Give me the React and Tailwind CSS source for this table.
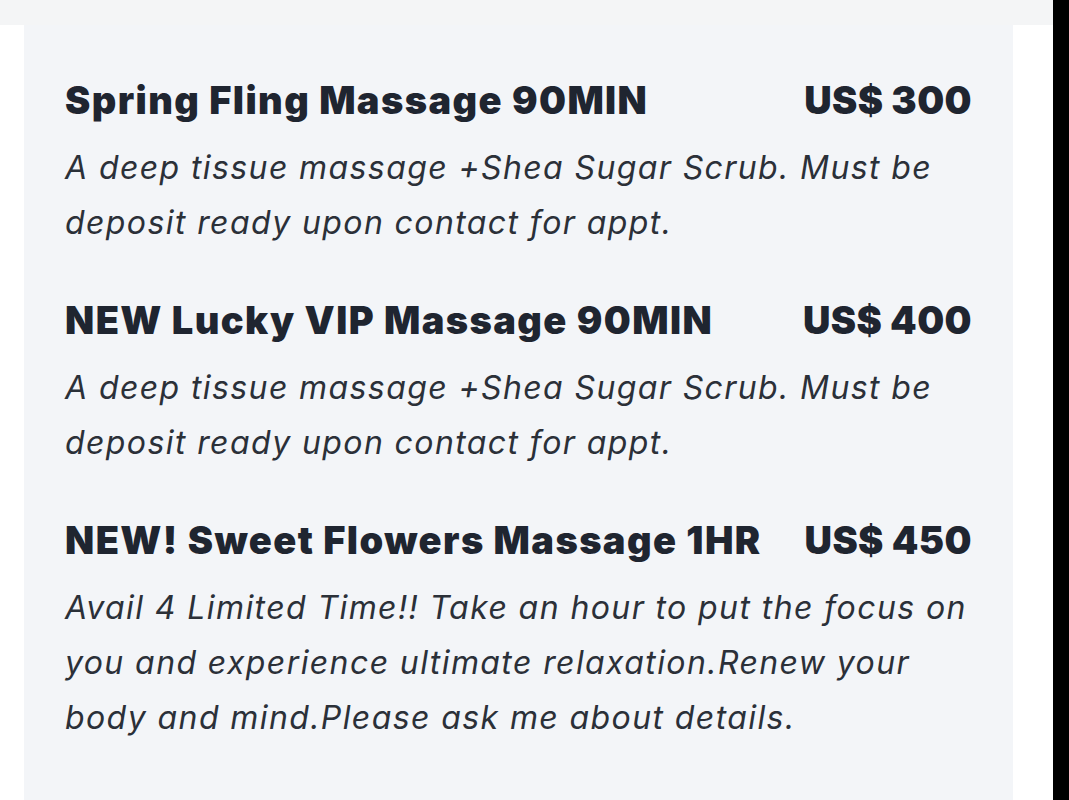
import React from "react";

const services = [
  {
    title: "Spring Fling Massage 90MIN",
    price: "US$ 300",
    text: "A deep tissue massage +Shea Sugar Scrub. Must be deposit ready upon contact for appt.",
  },
  {
    title: "NEW Lucky VIP Massage 90MIN",
    price: "US$ 400",
    text: "A deep tissue massage +Shea Sugar Scrub. Must be deposit ready upon contact for appt.",
  },
  {
    title: "NEW! Sweet Flowers Massage 1HR",
    price: "US$ 450",
    text: "Avail 4 Limited Time!! Take an hour to put the focus on you and experience ultimate relaxation.Renew your body and mind.Please ask me about details.",
  },
];

const App = () => {
  return (
    <div className="flex h-[800px] w-[1069px] overflow-hidden bg-white font-['Inter',sans-serif]">
      <div className="flex flex-1 flex-col">
        <div className="h-[25px] bg-[#f4f5f6]"></div>
        <div className="flex flex-1 bg-white pl-[24px] pr-[40px]">
          <div className="flex flex-1 flex-col gap-[48px] bg-[#f3f5f8] px-[41px] pt-[53px]">
            {services.map((item, key) => {
              return (
                <div key={key} className="flex flex-col gap-[18px]">
                  <div className="flex items-baseline justify-between text-[38px] font-black leading-[44px] tracking-[1.4px] text-[#1f2530]">
                    <h3>{item.title}</h3>
                    <p className="tracking-[0.4px]">{item.price}</p>
                  </div>
                  <p className="text-[32px] italic leading-[55px] tracking-[1.4px] text-[#2b3038]">{item.text}</p>
                </div>
              );
            })}
          </div>
        </div>
      </div>
      <div className="w-[16px] bg-black"></div>
    </div>
  );
};

export default App;
